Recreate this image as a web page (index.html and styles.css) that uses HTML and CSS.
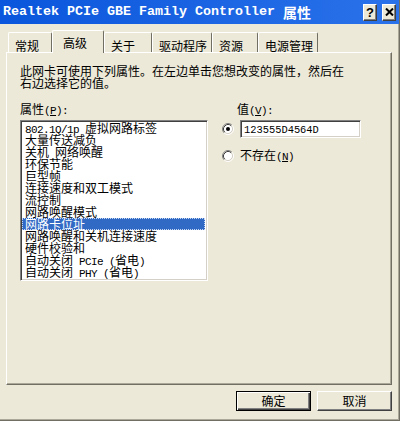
FILE: index.html
```html
<!DOCTYPE html>
<html>
<head>
<meta charset="utf-8">
<link rel="stylesheet" href="styles.css">
</head>
<body>
<div class="window">
  <div class="titlebar">
    <div class="title"><span class="title-en">Realtek PCIe GBE Family Controller </span><span class="title-cn">属性</span></div>
    <div class="title-buttons">
      <div class="tbtn">?</div>
      <div class="tbtn"><svg width="9" height="8" viewBox="0 0 9 8"><path d="M1 0.5 L8 7.5 M8 0.5 L1 7.5" stroke="#000" stroke-width="2" fill="none"/></svg></div>
    </div>
  </div>
  <div class="tabs">
    <div class="tab">常规</div>
    <div class="tab tab-active">高级</div>
    <div class="tab">关于</div>
    <div class="tab">驱动程序</div>
    <div class="tab">资源</div>
    <div class="tab">电源管理</div>
  </div>
  <div class="panel">
    <p class="desc">此网卡可使用下列属性。在左边单击您想改变的属性，然后在<br>右边选择它的值。</p>
    <div class="cols">
      <div class="col-left">
        <div class="label">属性<span class="lat">(<u>P</u>):</span></div>
        <div class="list">
          <div class="item"><span class="lat">802.1Q/1p </span>虚拟网路标签</div>
          <div class="item">大量传送减负</div>
          <div class="item">关机<span class="lat"> </span>网络唤醒</div>
          <div class="item">环保节能</div>
          <div class="item">巨型帧</div>
          <div class="item">连接速度和双工模式</div>
          <div class="item">流控制</div>
          <div class="item">网路唤醒模式</div>
          <div class="item item-selected">网路卡位址</div>
          <div class="item">网路唤醒和关机连接速度</div>
          <div class="item">硬件校验和</div>
          <div class="item">自动关闭<span class="lat"> PCIe (</span>省电<span class="lat">)</span></div>
          <div class="item">自动关闭<span class="lat"> PHY (</span>省电<span class="lat">)</span></div>
        </div>
      </div>
      <div class="col-right">
        <div class="label label-value">值<span class="lat">(<u>V</u>):</span></div>
        <div class="radio-row">
          <svg class="radio" width="12" height="12" viewBox="0 0 12 12">
            <circle cx="6" cy="6" r="4.5" fill="#fff"/>
            <path d="M2.11 9.89 A5.5 5.5 0 0 1 9.89 2.11" stroke="#808080" fill="none"/>
            <path d="M9.89 2.11 A5.5 5.5 0 0 1 2.11 9.89" stroke="#fff" fill="none"/>
            <path d="M2.82 9.18 A4.5 4.5 0 0 1 9.18 2.82" stroke="#404040" fill="none"/>
            <path d="M9.18 2.82 A4.5 4.5 0 0 1 2.82 9.18" stroke="#d4d0c8" fill="none"/>
            <circle cx="6" cy="6" r="2" fill="#000"/>
          </svg>
          <div class="value-box">123555D4564D</div>
        </div>
        <div class="radio-row radio-row-second">
          <svg class="radio" width="12" height="12" viewBox="0 0 12 12">
            <circle cx="6" cy="6" r="4.5" fill="#fff"/>
            <path d="M2.11 9.89 A5.5 5.5 0 0 1 9.89 2.11" stroke="#808080" fill="none"/>
            <path d="M9.89 2.11 A5.5 5.5 0 0 1 2.11 9.89" stroke="#fff" fill="none"/>
            <path d="M2.82 9.18 A4.5 4.5 0 0 1 9.18 2.82" stroke="#404040" fill="none"/>
            <path d="M9.18 2.82 A4.5 4.5 0 0 1 2.82 9.18" stroke="#d4d0c8" fill="none"/>
          </svg>
          <span class="radio-label">不存在<span class="lat">(<u>N</u>)</span></span>
        </div>
      </div>
    </div>
  </div>
  <div class="footer">
    <div class="btn btn-default">确定</div>
    <div class="btn">取消</div>
  </div>
</div>
</body>
</html>
```
FILE: styles.css
```css
body {
  margin: 0;
  background: #ece9d8;
  font-family: "Noto Sans CJK SC", sans-serif;
  font-size: 12px;
  line-height: 12px;
  color: #000;
}

.window {
  width: 400px;
  height: 421px;
  box-sizing: border-box;
  border-right: 1px solid #716f64;
  border-bottom: 1px solid #716f64;
  box-shadow: inset -1px -1px 0 #aca899;
  display: flex;
  flex-direction: column;
  background: #ece9d8;
}

.titlebar {
  height: 24px;
  flex: none;
  background: linear-gradient(to right, #0a56dc, #2a72ea);
  display: flex;
  align-items: center;
  justify-content: space-between;
  padding: 0 3px 0 3px;
}

.title {
  display: flex;
  align-items: center;
  color: #fff;
  white-space: pre;
}

.title-en {
  font-family: "Liberation Mono", monospace;
  font-weight: bold;
  font-size: 13.33px;
}

.title-cn {
  font-family: "Noto Sans CJK SC", sans-serif;
  font-weight: bold;
  font-size: 14px;
}

.title-buttons {
  display: flex;
  gap: 5px;
}

.tbtn {
  width: 14px;
  height: 17px;
  box-sizing: border-box;
  background: #ece9d8;
  border-top: 1px solid #fff;
  border-left: 1px solid #fff;
  border-right: 1px solid #404040;
  border-bottom: 1px solid #404040;
  box-shadow: inset -1px -1px 0 #808080;
  display: flex;
  align-items: center;
  justify-content: center;
  font-family: "Liberation Sans", sans-serif;
  font-weight: bold;
  font-size: 13px;
  line-height: 13px;
}

.tabs {
  display: flex;
  align-items: flex-end;
  height: 22px;
  margin-top: 6px;
  padding-left: 8px;
  flex: none;
}

.tab {
  box-sizing: border-box;
  height: 20px;
  padding: 7px 0 0 6px;
  border-top: 1px solid #fff;
  border-left: 1px solid #fff;
  border-right: 1px solid #716f64;
  border-radius: 2px 2px 0 0;
  background: #ece9d8;
  white-space: nowrap;
}

.tab:nth-child(1) { width: 44px; }
.tab:nth-child(2) { width: 52px; }
.tab:nth-child(3) { width: 48px; }
.tab:nth-child(4) { width: 60px; }
.tab:nth-child(5) { width: 46px; }
.tab:nth-child(6) { width: 60px; }

.tab-active {
  height: 23px;
  padding: 6px 0 0 10px;
  margin-bottom: -1px;
  position: relative;
  z-index: 1;
}

.panel {
  flex: none;
  height: 333px;
  margin: 0 7px 0 6px;
  box-sizing: border-box;
  border-top: 1px solid #fff;
  border-left: 1px solid #fff;
  border-right: 1px solid #716f64;
  border-bottom: 1px solid #716f64;
  box-shadow: inset -1px -1px 0 #aca899;
  padding: 12px 0 0 13px;
}

.desc {
  margin: 0;
  line-height: 12px;
}

.cols {
  display: flex;
  margin-top: 14px;
}

.col-left {
  width: 188px;
  flex: none;
}

.label {
  height: 12px;
  line-height: 12px;
  margin-bottom: 5px;
  white-space: nowrap;
}

.lat {
  font-family: "Liberation Mono", monospace;
  font-size: 11px;
  letter-spacing: -0.6px;
  white-space: pre;
}

.list {
  box-sizing: border-box;
  width: 188px;
  height: 161px;
  background: #fff;
  border: 1px solid;
  border-color: #808080 #fff #fff #808080;
  box-shadow: inset 1px 1px 0 #404040, inset -1px -1px 0 #d4d0c8;
  padding: 1px 2px 0 1px;
  overflow: hidden;
}

.item {
  height: 12px;
  line-height: 12px;
  padding-left: 3px;
  white-space: nowrap;
}

.item-selected {
  background: #316ac5;
  color: #fff;
  outline: 1px dotted #c8d8f4;
  outline-offset: -1px;
}

.col-right {
  margin-left: 14px;
  flex: 1;
}

.label-value {
  margin-left: 15px;
}

.radio-row {
  display: flex;
  align-items: center;
  gap: 6px;
  height: 18px;
}

.radio-row-second {
  height: 12px;
  margin-top: 12px;
}

.radio {
  flex: none;
  display: block;
}

.value-box {
  box-sizing: border-box;
  width: 121px;
  height: 18px;
  background: #fff;
  border: 1px solid;
  border-color: #808080 #fff #fff #808080;
  box-shadow: inset 1px 1px 0 #404040, inset -1px -1px 0 #d4d0c8;
  padding: 4px 0 0 3px;
  font-family: "Liberation Mono", monospace;
  font-size: 10.4px;
  line-height: 10px;
}

.radio-label {
  white-space: nowrap;
}

.footer {
  display: flex;
  justify-content: flex-end;
  gap: 6px;
  margin-top: 6px;
  padding-right: 7px;
}

.btn {
  box-sizing: border-box;
  width: 75px;
  height: 20px;
  display: flex;
  align-items: center;
  justify-content: center;
  background: #ece9d8;
  border: 1px solid;
  border-color: #fff #404040 #404040 #fff;
  box-shadow: inset -1px -1px 0 #808080;
}

.btn-default {
  border-color: #000;
  box-shadow: inset 1px 1px 0 #fff, inset -1px -1px 0 #404040, inset -2px -2px 0 #808080;
}
```
